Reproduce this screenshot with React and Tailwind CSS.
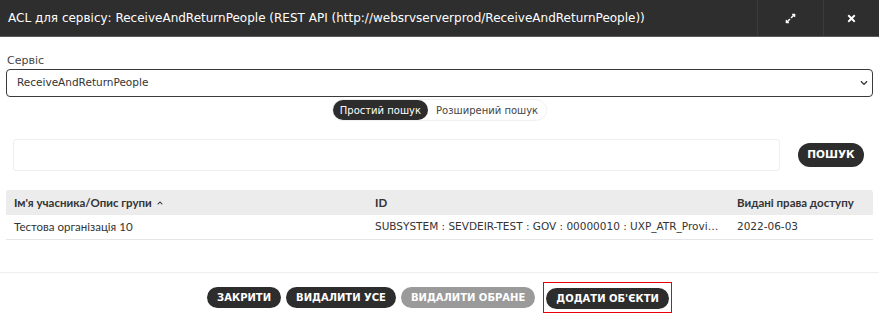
import React from 'react';
import { FaExpandAlt, FaTimes, FaChevronDown, FaChevronUp } from 'react-icons/fa';

const font = { fontFamily: '"DejaVu Sans", Verdana, sans-serif' };
const lato = { fontFamily: 'Lato, "DejaVu Sans", sans-serif' };

const Pill = ({ children, muted }) => (
  <button
    className={`h-[21px] px-[10px] rounded-full text-[10px] font-bold uppercase text-white ${muted ? 'bg-[#9a9a9a]' : 'bg-[#2d2d2d]'}`}
  >
    {children}
  </button>
);

export default function App() {
  return (
    <div className="w-[879px] h-[316px] bg-white text-[#333] overflow-hidden" style={font}>
      {/* Header */}
      <div className="flex h-[37px] bg-[#2e2e2e] border-b border-[#5a5a5a]">
        <div className="flex-1 flex items-center pl-[8px] text-[12px] text-white whitespace-nowrap">
          ACL для сервісу: ReceiveAndReturnPeople (REST API (http://websrvserverprod/ReceiveAndReturnPeople))
        </div>
        <div className="w-[66px] flex items-center justify-center border-l border-[#3b3b3b] text-white">
          <FaExpandAlt className="w-[11px] h-[11px]" />
        </div>
        <div className="w-[56px] flex items-center justify-center border-l border-[#3b3b3b] text-white">
          <FaTimes className="w-[11px] h-[11px]" />
        </div>
      </div>

      <div className="px-[6px]">
        <div className="pt-[16px] text-[11px] leading-[16px] pl-[1px] text-[#444]">Сервіс</div>
        <div className="h-[28px] border-[1.5px] border-[#3a3a3a] rounded-[4px] flex items-center justify-between pl-[10px] pr-[4px] text-[10.5px]">
          <span>ReceiveAndReturnPeople</span>
          <FaChevronDown className="w-[8px] h-[8px] text-[#333]" />
        </div>

        {/* Tabs */}
        <div className="flex justify-center mt-[2px]">
          <div className="flex h-[22px] rounded-full border border-[#f0f0f0] text-[10px]">
            <div className="flex items-center px-[7px] bg-[#2d2d2d] text-white rounded-full">Простий пошук</div>
            <div className="flex items-center px-[8px] text-[#444]">Розширений пошук</div>
          </div>
        </div>

        {/* Search */}
        <div className="flex items-center mt-[18px] pl-[7px] pr-[9px] gap-[18px]">
          <div className="flex-1 h-[32px] border border-[#eeeeee] rounded-[3px]" />
          <button className="w-[66px] h-[24px] rounded-full bg-[#2d2d2d] text-white text-[10.5px] font-bold uppercase">
            пошук
          </button>
        </div>

        {/* Table */}
        <div className="mt-[19px] text-[11px]">
          <div className="grid grid-cols-[361px_362px_1fr] h-[25px] bg-[#ececec] rounded-t-[3px] font-bold items-center whitespace-nowrap" style={lato}>
            <div className="pl-[8px] flex items-center gap-[5px] text-[11.5px]">
              Ім'я учасника/Опис групи <FaChevronUp className="w-[6px] h-[6px]" />
            </div>
            <div className="pl-[8px] text-[11.5px]">ID</div>
            <div className="pl-[8px] text-[11.5px]">Видані права доступу</div>
          </div>
          <div className="grid grid-cols-[361px_362px_1fr] h-[25px] border-b border-[#e6e6e6] items-center">
            <div className="pl-[8px] text-[11.5px]" style={lato}>Тестова організація 10</div>
            <div className="pl-[8px] pr-[6px] truncate text-[10.5px]">SUBSYSTEM : SEVDEIR-TEST : GOV : 00000010 : UXP_ATR_Provider</div>
            <div className="pl-[8px] text-[10.5px]">2022-06-03</div>
          </div>
        </div>
      </div>

      {/* Footer */}
      <div className="mt-[32px] border-t border-[#eeeeee] pt-[9px] flex justify-center items-center gap-[5px]">
        <Pill>Закрити</Pill>
        <Pill>Видалити усе</Pill>
        <Pill muted>Видалити обране</Pill>
        <div className="ml-[3px] border border-solid border-red-600 p-[2px] pb-[3px]">
          <Pill>Додати об'єкти</Pill>
        </div>
      </div>
    </div>
  );
}
